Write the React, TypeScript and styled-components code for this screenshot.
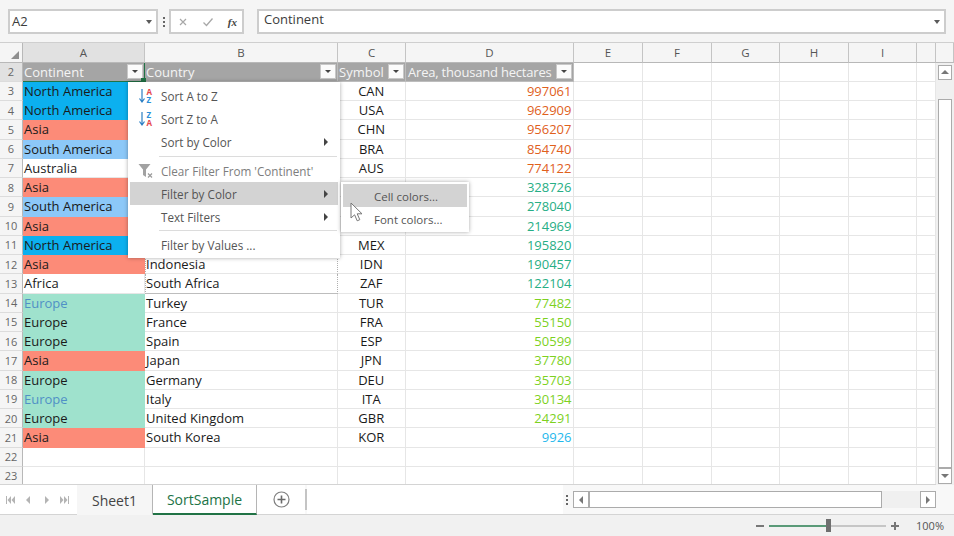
import React from "react";
import styled, { createGlobalStyle } from "styled-components";

const GlobalStyle = createGlobalStyle`
  html, body { margin: 0; padding: 0; background: #f1f1f1; }
  body { font-family: "Open Sans", "Noto Sans", sans-serif; overflow: hidden; }
  * { box-sizing: border-box; }
`;

const COLS = "122px 193px 68px 168px 69px 69px 68px 69px 68px 19px";
const ROW_H = 19.25;

const Window = styled.div`
  position: relative;
  width: 954px;
  height: 536px;
  display: flex;
  flex-direction: column;
  overflow: hidden;
`;

/* ---- formula bar ---- */
const FormulaBar = styled.div`
  height: 43px;
  padding: 9px 8px 0 8px;
  display: flex;
  align-items: flex-start;
  background: #f5f5f5;
  border-bottom: 1px solid #cfcfcf;
`;

const Box = styled.div<{ $w?: number }>`
  height: 25px;
  background: #fff;
  border: 2px solid #cdcdcd;
  display: flex;
  align-items: center;
  color: #3c3c3c;
  font-size: 13px;
  ${(p) => (p.$w ? `width: ${p.$w}px;` : "flex: 1;")}
`;

const BoxText = styled.span<{ $pad: number; $lift: number }>`
  flex: 1;
  padding-left: ${(p) => p.$pad}px;
  margin-top: -${(p) => p.$lift}px;
`;

const Caret = styled.span`
  width: 0;
  height: 0;
  margin-right: 4px;
  border-left: 3.5px solid transparent;
  border-right: 3.5px solid transparent;
  border-top: 4px solid #5a5a5a;
`;

const Grip = styled.div`
  width: 11px;
  height: 25px;
  display: flex;
  flex-direction: column;
  align-items: center;
  justify-content: center;
  gap: 2px;
  i {
    width: 2px;
    height: 2px;
    background: #666;
  }
`;

const FxIcons = styled.div`
  flex: 1;
  display: flex;
  align-items: center;
  justify-content: space-between;
  padding: 0 5px 0 7px;
`;

const FxLabel = styled.span`
  font-family: "Liberation Serif", serif;
  font-style: italic;
  font-weight: 700;
  font-size: 11px;
  color: #444;
`;

const Gap = styled.div<{ $w: number }>`
  width: ${(p) => p.$w}px;
`;

/* ---- sheet ---- */
const HeaderRow = styled.div`
  display: flex;
  height: 19.5px;
  background: #f5f5f5;
`;

const Corner = styled.div`
  width: 23px;
  border-right: 1px solid #b8b8b8;
  border-bottom: 1px solid #b8b8b8;
  display: flex;
  align-items: flex-end;
  justify-content: flex-end;
  padding: 0 3px 3px 0;
  i {
    width: 0;
    height: 0;
    border-left: 8px solid transparent;
    border-bottom: 8px solid #8f8f8f;
  }
`;

const ColHeaders = styled.div`
  display: grid;
  grid-template-columns: ${COLS} 18px;
  flex: 1;
`;

const ColHead = styled.div<{ $active?: boolean }>`
  display: flex;
  align-items: center;
  justify-content: center;
  font-size: 11.5px;
  color: #555;
  background: ${(p) => (p.$active ? "#e1e1e1" : "#f5f5f5")};
  border-right: 1px solid #c4c4c4;
  border-bottom: 1px solid #b8b8b8;
`;

const Body = styled.div`
  display: flex;
  height: 422.5px;
  background: #fff;
`;

const Sheet = styled.div`
  display: grid;
  grid-template-columns: 23px ${COLS};
  grid-auto-rows: ${ROW_H}px;
  width: 936px;
  overflow: hidden;
  border-bottom: 1px solid #d4d4d4;
`;

const RowHead = styled.div<{ $active?: boolean }>`
  display: flex;
  align-items: center;
  justify-content: center;
  font-size: 11px;
  color: #666;
  background: ${(p) => (p.$active ? "#e1e1e1" : "#f5f5f5")};
  border-right: 1px solid #b8b8b8;
  border-bottom: 1px solid #dcdcdc;
`;

const Cell = styled.div<{
  $fill?: string;
  $color?: string;
  $align?: string;
  $dotted?: boolean;
  $last?: boolean;
}>`
  display: flex;
  align-items: center;
  justify-content: ${(p) => p.$align || "flex-start"};
  padding: 0 1.5px 0 ${(p) => (p.$dotted ? 0 : 1)}px;
  font-size: 13px;
  white-space: nowrap;
  color: ${(p) => p.$color || "#1a1a1a"};
  background: ${(p) => p.$fill || "#fff"};
  border-right: 1px solid ${(p) => p.$fill || "#e6e6e6"};
  border-bottom: 1px solid ${(p) => p.$fill || "#e6e6e6"};
  ${(p) =>
    p.$dotted
      ? `border-left: 1px dotted #b0b0b0; border-right: 1px dotted #b0b0b0;`
      : ""}
  ${(p) => (p.$last ? `border-bottom: 1px solid #bdbdbd;` : "")}
`;

const TitleCell = styled.div<{ $selected?: boolean; $tight?: boolean }>`
  position: relative;
  display: flex;
  align-items: center;
  justify-content: space-between;
  padding: 0 1px 0 ${(p) => (p.$tight ? 2 : 1)}px;
  font-size: 13px;
  white-space: nowrap;
  ${(p) => (p.$tight ? "letter-spacing: -0.2px;" : "")}
  color: #f4f4f4;
  background: #a5a5a5;
  border-right: 1px solid ${(p) => (p.$selected ? "#217346" : "#bdbdbd")};
  border-bottom: 1px solid ${(p) => (p.$selected ? "#217346" : "#bdbdbd")};
`;

const FillHandle = styled.i`
  position: absolute;
  right: -2px;
  bottom: -2px;
  width: 5px;
  height: 5px;
  background: #217346;
  z-index: 2;
`;

const FilterButton = styled.span`
  flex: none;
  width: 16px;
  height: 15px;
  background: #fbfbfb;
  border: 1px solid #c8c8c8;
  display: flex;
  align-items: center;
  justify-content: center;
  &::after {
    content: "";
    border-left: 3px solid transparent;
    border-right: 3px solid transparent;
    border-top: 3.5px solid #444;
  }
`;

/* ---- scroll bars ---- */
const VScroll = styled.div`
  width: 18px;
  display: flex;
  flex-direction: column;
  background: #f0f0f0;
  padding: 2px 2px 1px 2px;
`;

const ScrollBtn = styled.div<{ $h?: number; $w?: number }>`
  flex: none;
  width: ${(p) => p.$w ?? 14}px;
  height: ${(p) => p.$h ?? 15}px;
  background: #fff;
  border: 1px solid #ababab;
  display: flex;
  align-items: center;
  justify-content: center;
`;

const Tri = styled.i<{ $dir: "up" | "down" | "left" | "right" }>`
  width: 0;
  height: 0;
  ${(p) =>
    p.$dir === "up"
      ? "border-left:4px solid transparent;border-right:4px solid transparent;border-bottom:4px solid #777;"
      : p.$dir === "down"
      ? "border-left:4px solid transparent;border-right:4px solid transparent;border-top:4px solid #777;"
      : p.$dir === "left"
      ? "border-top:4px solid transparent;border-bottom:4px solid transparent;border-right:4px solid #777;"
      : "border-top:4px solid transparent;border-bottom:4px solid transparent;border-left:4px solid #777;"}
`;

const VTrackGap = styled.div<{ $h: number }>`
  flex: none;
  height: ${(p) => p.$h}px;
`;

const VThumb = styled.div`
  flex: 1;
  background: #fff;
  border: 1px solid #ababab;
`;

/* ---- tabs ---- */
const TabBar = styled.div`
  height: 30px;
  display: flex;
  align-items: stretch;
  background: #f8f8f8;
  border-bottom: 1px solid #d4d4d4;
`;

const TabNav = styled.div`
  width: 77px;
  background: #fff;
  display: flex;
  align-items: center;
  justify-content: space-between;
  padding: 0 7px 0 5px;
  svg {
    display: block;
  }
`;

const Tab = styled.div<{ $active?: boolean; $w: number }>`
  width: ${(p) => p.$w}px;
  display: flex;
  align-items: center;
  justify-content: center;
  padding-top: 1px;
  font-size: 14px;
  margin-bottom: -1px;
  color: ${(p) => (p.$active ? "#217346" : "#444")};
  background: ${(p) => (p.$active ? "#fff" : "#f6f6f6")};
  border-right: 1px solid #b5b5b5;
  border-bottom: ${(p) => (p.$active ? "2px solid #217346" : "1px solid transparent")};
`;

const AddTab = styled.div`
  width: 48px;
  display: flex;
  align-items: center;
  justify-content: center;
  background: #fff;
`;

const TabDivider = styled.div`
  width: 2px;
  margin: 4px 0;
  background: #c4c4c4;
`;

const TabSpace = styled.div`
  flex: 1;
  background: #fff;
`;

const HScrollWrap = styled.div`
  width: 391px;
  display: flex;
  align-items: center;
  padding: 0 18px 0 0;
  background: #f8f8f8;
`;

const HGrip = styled(Grip)`
  width: 8px;
  margin-right: 2px;
`;

const HTrack = styled.div`
  flex: 1;
  height: 17px;
  display: flex;
  background: #f0f0f0;
`;

const HThumb = styled.div`
  width: 293px;
  background: #fff;
  border: 1px solid #ababab;
`;

const HTrackEnd = styled.div`
  flex: 1;
`;

/* ---- status bar ---- */
const StatusBar = styled.div`
  flex: 1;
  background: #f1f1f1;
  display: flex;
  align-items: center;
  justify-content: flex-end;
  padding: 0 10px 0 0;
  font-size: 11px;
  color: #555;
`;

const ZoomSign = styled.span`
  width: 8px;
  height: 2px;
  background: #777;
  position: relative;
`;

const ZoomPlus = styled(ZoomSign)`
  &::after {
    content: "";
    position: absolute;
    left: 3px;
    top: -3px;
    width: 2px;
    height: 8px;
    background: #777;
  }
`;

const Slider = styled.div`
  position: relative;
  width: 117px;
  height: 2px;
  margin: 0 5px;
  background: #c6c6c6;
`;

const SliderFill = styled.div`
  width: 57px;
  height: 2px;
  background: #5a9a78;
`;

const SliderThumb = styled.i`
  position: absolute;
  left: 57px;
  top: -6px;
  width: 5px;
  height: 13px;
  background: #6f6f6f;
`;

const ZoomValue = styled.span`
  margin-left: 17px;
`;

/* ---- filter menu ---- */
const Menu = styled.div`
  position: absolute;
  left: 128px;
  top: 82px;
  width: 212px;
  padding: 2px;
  background: #fff;
  box-shadow: 0 0 4px rgba(0, 0, 0, 0.35);
  z-index: 5;
`;

const MenuItem = styled.div<{ $active?: boolean; $disabled?: boolean }>`
  height: 23.2px;
  display: flex;
  align-items: center;
  padding-top: 1px;
  font-size: 11.7px;
  color: ${(p) => (p.$disabled ? "#7d7d7d" : "#555")};
  background: ${(p) => (p.$active ? "#d3d3d3" : "transparent")};
`;

const MenuIcon = styled.span`
  flex: none;
  width: 31px;
  display: flex;
  justify-content: center;
`;

const MenuLabel = styled.span`
  flex: 1;
`;

const MenuArrow = styled.i`
  margin-right: 10px;
  border-top: 4px solid transparent;
  border-bottom: 4px solid transparent;
  border-left: 4px solid #444;
`;

const MenuSep = styled.div`
  height: 1px;
  margin: 2px 1px 2px 29px;
  background: #dcdcdc;
`;

const SubMenu = styled.div`
  position: absolute;
  left: 341px;
  top: 182px;
  width: 128px;
  padding: 2px;
  background: #fff;
  box-shadow: 0 0 4px rgba(0, 0, 0, 0.35);
  z-index: 6;
`;

const SubItem = styled.div<{ $active?: boolean }>`
  height: 23.2px;
  display: flex;
  align-items: center;
  padding: 1.5px 0 0 31px;
  font-size: 11.5px;
  color: #555;
  background: ${(p) => (p.$active ? "#d3d3d3" : "transparent")};
`;

const Pointer = styled.svg`
  position: absolute;
  left: 350px;
  top: 202px;
  z-index: 7;
`;

/* ---- data ---- */
const BLUE = "#0cb0ef";
const SALMON = "#fc8b78";
const SKY = "#8cc8f8";
const TEAL = "#9fe2cd";
const ORANGE = "#e0601c";
const GREEN = "#27ae85";
const LIME = "#7dd11e";
const CYAN = "#1fb8ec";

type Row = [string, string, string, string, string, string, string?];

// country and symbol stay empty where the open menu covers them
const rows: Row[] = [
  ["North America", BLUE, "", "CAN", "997061", ORANGE],
  ["North America", BLUE, "", "USA", "962909", ORANGE],
  ["Asia", SALMON, "", "CHN", "956207", ORANGE],
  ["South America", SKY, "", "BRA", "854740", ORANGE],
  ["Australia", "", "", "AUS", "774122", ORANGE],
  ["Asia", SALMON, "", "", "328726", GREEN],
  ["South America", SKY, "", "", "278040", GREEN],
  ["Asia", SALMON, "", "", "214969", GREEN],
  ["North America", BLUE, "", "MEX", "195820", GREEN],
  ["Asia", SALMON, "Indonesia", "IDN", "190457", GREEN],
  ["Africa", "", "South Africa", "ZAF", "122104", GREEN],
  ["Europe", TEAL, "Turkey", "TUR", "77482", LIME, "#4f90c6"],
  ["Europe", TEAL, "France", "FRA", "55150", LIME],
  ["Europe", TEAL, "Spain", "ESP", "50599", LIME],
  ["Asia", SALMON, "Japan", "JPN", "37780", LIME],
  ["Europe", TEAL, "Germany", "DEU", "35703", LIME],
  ["Europe", TEAL, "Italy", "ITA", "30134", LIME, "#4f90c6"],
  ["Europe", TEAL, "United Kingdom", "GBR", "24291", LIME],
  ["Asia", SALMON, "South Korea", "KOR", "9926", CYAN],
];

const EmptyCells = ({ n }: { n: number }) => (
  <>
    {Array.from({ length: n }, (_, i) => (
      <Cell key={i} />
    ))}
  </>
);

const SortIcon = ({ top, bottom }: { top: string; bottom: string }) => (
  <svg width="16" height="17" viewBox="0 0 16 17">
    <path d="M4 1v12M1.5 10.5 4 14l2.5-3.5" fill="none" stroke="#2a7fc4" strokeWidth="1.2" />
    <text x="8.5" y="7" fontSize="8" fontWeight="700" fontFamily="Open Sans" fill={top === "A" ? "#e5484d" : "#2a8fd8"}>
      {top}
    </text>
    <text x="8.5" y="15" fontSize="8" fontWeight="700" fontFamily="Open Sans" fill={bottom === "A" ? "#e5484d" : "#2a8fd8"}>
      {bottom}
    </text>
  </svg>
);

const ClearFilterIcon = () => (
  <svg width="16" height="16" viewBox="0 0 16 16">
    <path d="M0.5 1h12L8 6.5V14L5 12V6.5z" fill="#a2a2a2" />
    <path d="M10 10.5l4 4M14 10.5l-4 4" stroke="#9a9a9a" strokeWidth="1.2" />
  </svg>
);

const NavIcon = ({ d }: { d: string }) => (
  <svg width="10" height="8" viewBox="0 0 10 8">
    <path d={d} fill="#b4b4b4" />
  </svg>
);

export default function App() {
  return (
    <Window>
      <GlobalStyle />
      <FormulaBar>
        <Box $w={150}>
          <BoxText $pad={2} $lift={1}>A2</BoxText>
          <Caret />
        </Box>
        <Grip>
          <i />
          <i />
          <i />
        </Grip>
        <Box $w={75}>
          <FxIcons>
            <svg width="10" height="10" viewBox="0 0 10 10">
              <path d="M2 2l6 6M8 2l-6 6" stroke="#a8a8a8" strokeWidth="1.2" />
            </svg>
            <svg width="12" height="10" viewBox="0 0 12 10">
              <path d="M1.5 5.5 4.5 8.5 10.5 1.5" fill="none" stroke="#a8a8a8" strokeWidth="1.3" />
            </svg>
            <FxLabel>fx</FxLabel>
          </FxIcons>
        </Box>
        <Gap $w={13} />
        <Box>
          <BoxText $pad={5} $lift={6}>Continent</BoxText>
          <Caret />
        </Box>
      </FormulaBar>

      <HeaderRow>
        <Corner>
          <i />
        </Corner>
        <ColHeaders>
          <ColHead $active>A</ColHead>
          {["B", "C", "D", "E", "F", "G", "H", "I", "", ""].map((c, i) => (
            <ColHead key={i}>{c}</ColHead>
          ))}
        </ColHeaders>
      </HeaderRow>

      <Body>
        <Sheet>
          <RowHead $active>2</RowHead>
          <TitleCell $selected>
            Continent
            <FilterButton />
            <FillHandle />
          </TitleCell>
          <TitleCell>
            Country
            <FilterButton />
          </TitleCell>
          <TitleCell>
            Symbol
            <FilterButton />
          </TitleCell>
          <TitleCell $tight>
            Area, thousand hectares
            <FilterButton />
          </TitleCell>
          <EmptyCells n={6} />
          {rows.map((r, i) => (
            <React.Fragment key={i}>
              <RowHead>{i + 3}</RowHead>
              <Cell $fill={r[1] || undefined} $color={r[6]}>
                {r[0]}
              </Cell>
              <Cell $dotted={i === 9 || i === 10} $last={i === 10}>
                {r[2]}
              </Cell>
              <Cell $align="center">{r[3]}</Cell>
              <Cell $align="flex-end" $color={r[5]}>
                {r[4]}
              </Cell>
              <EmptyCells n={6} />
            </React.Fragment>
          ))}
          {[22, 23].map((n) => (
            <React.Fragment key={n}>
              <RowHead>{n}</RowHead>
              <EmptyCells n={10} />
            </React.Fragment>
          ))}
        </Sheet>
        <VScroll>
          <ScrollBtn>
            <Tri $dir="up" />
          </ScrollBtn>
          <VTrackGap $h={19} />
          <VThumb />
          <ScrollBtn $h={16}>
            <Tri $dir="down" />
          </ScrollBtn>
        </VScroll>
      </Body>

      <TabBar>
        <TabNav>
          <NavIcon d="M1 0h1v8H1zM6 0v8L2.5 4zM10 0v8L6.5 4z" />
          <NavIcon d="M7 0v8L3 4z" />
          <NavIcon d="M3 0v8l4-4z" />
          <NavIcon d="M0 0v8l3.5-4zM4 0v8l3.5-4zM8 0h1v8H8z" />
        </TabNav>
        <Tab $w={76}>Sheet1</Tab>
        <Tab $w={104} $active>
          SortSample
        </Tab>
        <AddTab>
          <svg width="17" height="17" viewBox="0 0 17 17">
            <circle cx="8.5" cy="8.5" r="7.5" fill="none" stroke="#7f7f7f" strokeWidth="1.2" />
            <path d="M8.5 4.5v8M4.5 8.5h8" stroke="#6a6a6a" strokeWidth="1.6" />
          </svg>
        </AddTab>
        <TabDivider />
        <TabSpace />
        <HScrollWrap>
          <HGrip>
            <i />
            <i />
            <i />
          </HGrip>
          <HTrack>
            <ScrollBtn $w={16} $h={17}>
              <Tri $dir="left" />
            </ScrollBtn>
            <HThumb />
            <HTrackEnd />
            <ScrollBtn $w={16} $h={17}>
              <Tri $dir="right" />
            </ScrollBtn>
          </HTrack>
        </HScrollWrap>
      </TabBar>

      <StatusBar>
        <ZoomSign />
        <Slider>
          <SliderFill />
          <SliderThumb />
        </Slider>
        <ZoomPlus />
        <ZoomValue>100%</ZoomValue>
      </StatusBar>

      <Menu>
        <MenuItem>
          <MenuIcon>
            <SortIcon top="A" bottom="Z" />
          </MenuIcon>
          <MenuLabel>Sort A to Z</MenuLabel>
        </MenuItem>
        <MenuItem>
          <MenuIcon>
            <SortIcon top="Z" bottom="A" />
          </MenuIcon>
          <MenuLabel>Sort Z to A</MenuLabel>
        </MenuItem>
        <MenuItem>
          <MenuIcon />
          <MenuLabel>Sort by Color</MenuLabel>
          <MenuArrow />
        </MenuItem>
        <MenuSep />
        <MenuItem $disabled>
          <MenuIcon>
            <ClearFilterIcon />
          </MenuIcon>
          <MenuLabel>Clear Filter From 'Continent'</MenuLabel>
        </MenuItem>
        <MenuItem $active>
          <MenuIcon />
          <MenuLabel>Filter by Color</MenuLabel>
          <MenuArrow />
        </MenuItem>
        <MenuItem>
          <MenuIcon />
          <MenuLabel>Text Filters</MenuLabel>
          <MenuArrow />
        </MenuItem>
        <MenuSep />
        <MenuItem>
          <MenuIcon />
          <MenuLabel>Filter by Values ...</MenuLabel>
        </MenuItem>
      </Menu>

      <SubMenu>
        <SubItem $active>Cell colors...</SubItem>
        <SubItem>Font colors...</SubItem>
      </SubMenu>

      <Pointer width="14" height="21" viewBox="0 0 14 21">
        <path d="M1 1v15l3.6-3.2 2.6 6 2.6-1.1-2.6-5.9H12z" fill="#fff" stroke="#777" strokeWidth="1" />
      </Pointer>
    </Window>
  );
}
